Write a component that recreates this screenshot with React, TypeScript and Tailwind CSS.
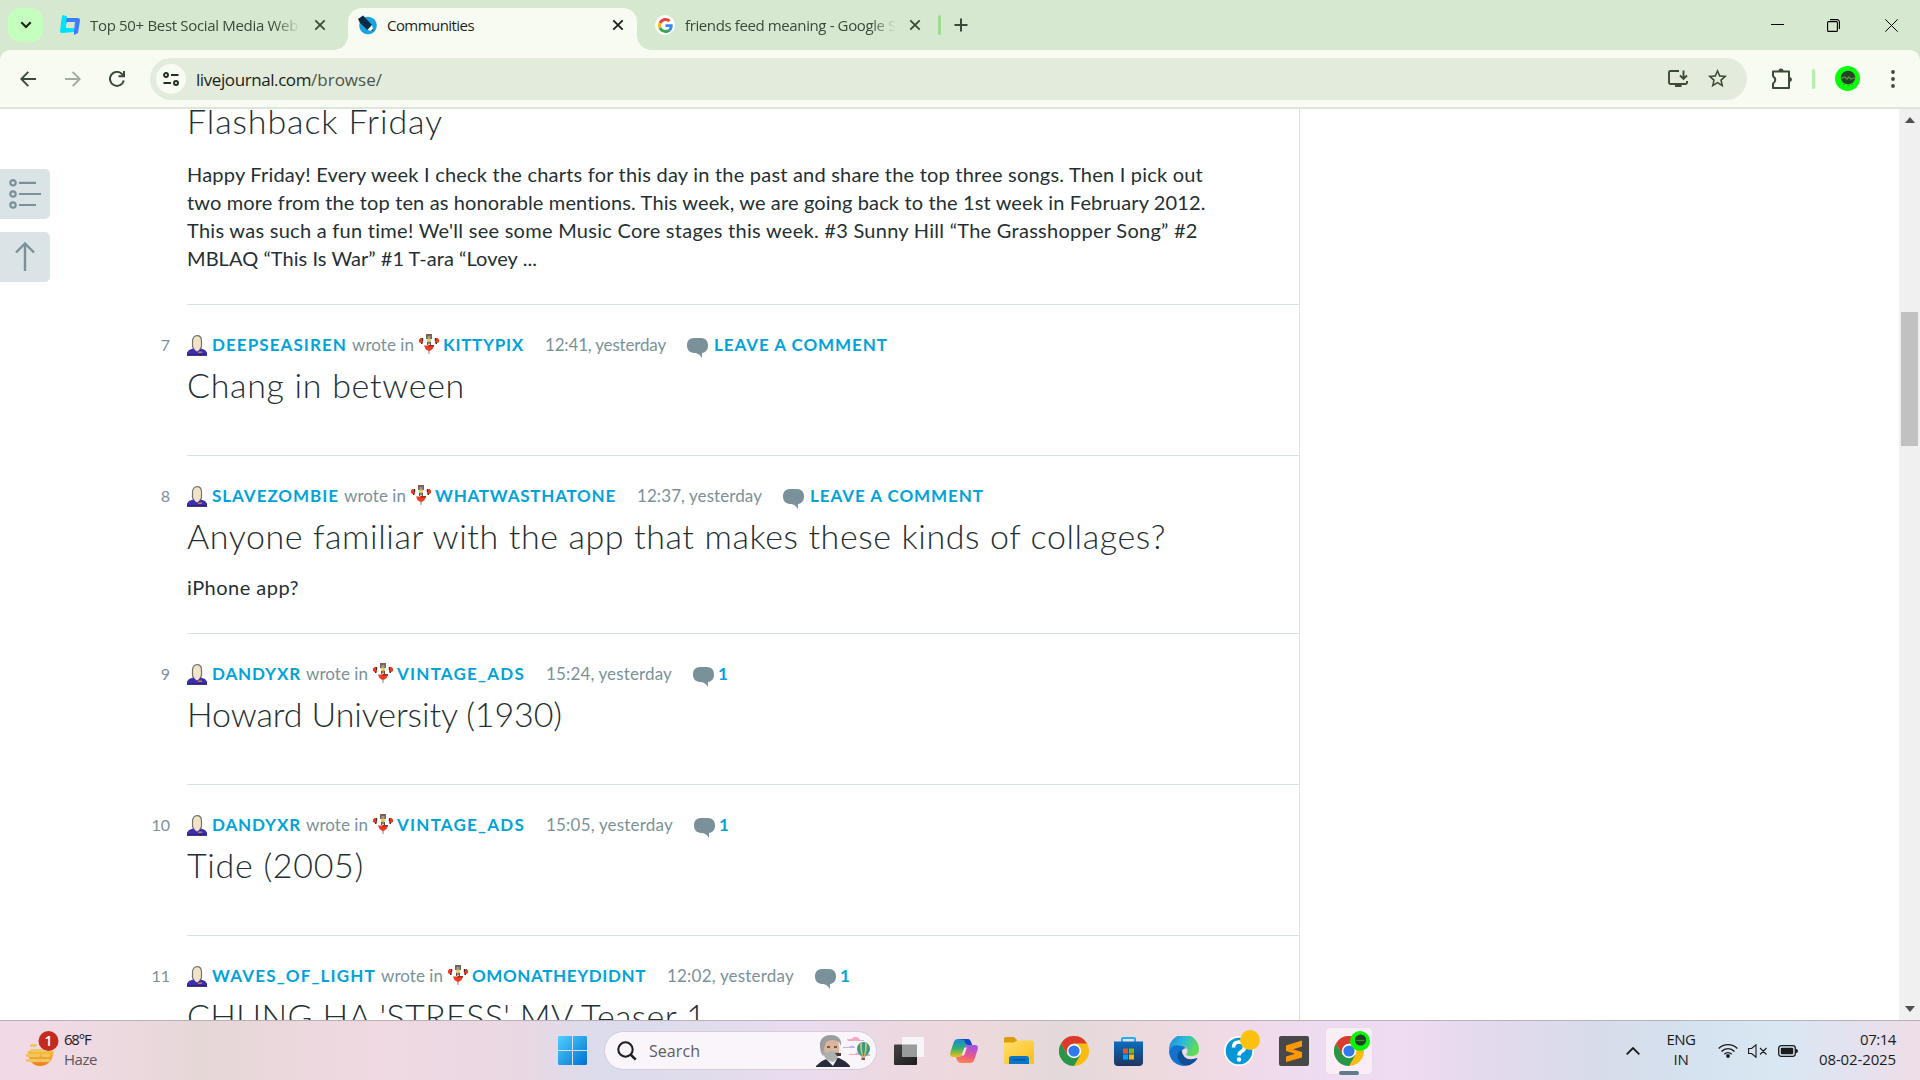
import { useLayoutEffect, useRef, type ReactNode } from "react";

/** Text whose tracking is tuned at runtime so that it spans exactly `w` pixels. */
function Fit({ w, className = "", children }: { w: number; className?: string; children: ReactNode }) {
  const ref = useRef<HTMLSpanElement>(null);
  useLayoutEffect(() => {
    const el = ref.current;
    if (!el) return;
    el.style.letterSpacing = "0px";
    const n = (el.textContent ?? "").length;
    const spacing = (w - el.getBoundingClientRect().width) / n;
    el.style.letterSpacing = `${spacing}px`;
  }, [w]);
  return (
    <span ref={ref} className={`inline-block whitespace-pre ${className}`}>
      {children}
    </span>
  );
}

const UI = "font-['Open_Sans','Noto_Sans',sans-serif]";

function CloseX({ className = "" }: { className?: string }) {
  return (
    <svg viewBox="0 0 12 12" className={`h-3 w-3 shrink-0 ${className}`} fill="none" stroke="currentColor" strokeWidth="1.8">
      <path d="M1.3 1.3l9.4 9.4M10.7 1.3l-9.4 9.4" />
    </svg>
  );
}

function GoogleG({ className = "" }: { className?: string }) {
  return (
    <svg viewBox="0 0 48 48" className={className}>
      <path fill="#EA4335" d="M24 9.5c3.54 0 6.71 1.22 9.21 3.6l6.85-6.85C35.9 2.38 30.47 0 24 0 14.62 0 6.51 5.38 2.56 13.22l7.98 6.19C12.43 13.72 17.74 9.5 24 9.5z" />
      <path fill="#4285F4" d="M46.98 24.55c0-1.57-.15-3.09-.38-4.55H24v9.02h12.94c-.58 2.96-2.26 5.48-4.78 7.18l7.73 6c4.51-4.18 7.09-10.36 7.09-17.65z" />
      <path fill="#FBBC05" d="M10.53 28.59c-.48-1.45-.76-2.99-.76-4.59s.27-3.14.76-4.59l-7.98-6.19C.92 16.46 0 20.12 0 24c0 3.88.92 7.54 2.56 10.78l7.97-6.19z" />
      <path fill="#34A853" d="M24 48c6.48 0 11.93-2.13 15.89-5.81l-7.73-6c-2.15 1.45-4.92 2.3-8.16 2.3-6.26 0-11.57-4.22-13.47-9.91l-7.98 6.19C6.51 42.62 14.62 48 24 48z" />
    </svg>
  );
}

function TabStrip() {
  return (
    <div className="flex h-[50px] items-end bg-[#d6e8cf] text-[#3a4a38]">
      <div className="ml-2 flex h-[50px] w-[35px] shrink-0 items-center">
        <div className="flex h-[34px] w-[35px] items-center justify-center rounded-xl bg-[#c5ffbe] text-[#14260f]">
          <svg viewBox="0 0 12 8" className="h-2 w-3" fill="none" stroke="currentColor" strokeWidth="2.1">
            <path d="M1.3 1.3L6 6l4.7-4.7" />
          </svg>
        </div>
      </div>

      <div className="flex h-[50px] w-[305px] shrink-0 items-center pl-[17px]">
        <svg viewBox="0 0 20 20" className="h-5 w-5 shrink-0">
          <path fill="#00e1fb" d="M3 0l4 1.5V3h3l-1 4H7l-1 6h8v4L2 18a2 2 0 0 1-2-2L1.800 2z" />
          <path fill="#3d7bff" d="M7 3h11a2 2 0 0 1 2 2l-2 13-4 2v-4l1-9H6z" />
          <path fill="#d6e8cf" d="M7 7.500h7l-1 5H6z" />
        </svg>
        <div className="ml-[10px] w-[210px] overflow-hidden [mask-image:linear-gradient(to_right,black_88%,transparent_100%)]">
          <Fit w={208} className="text-[15px] leading-6">Top 50+ Best Social Media Web</Fit>
        </div>
        <CloseX className="ml-[14px]" />
      </div>

      <div className="relative flex h-[42px] w-[289px] shrink-0 items-center rounded-t-[14px] bg-[#f8fbf2] pb-2 pl-[9px] text-[#1a1f19]">
        <div className="absolute bottom-0 -left-3.5 h-3.5 w-3.5 bg-[radial-gradient(circle_at_0_0,transparent_13.5px,#f8fbf2_14px)]" />
        <div className="absolute -right-3.5 bottom-0 h-3.5 w-3.5 bg-[radial-gradient(circle_at_100%_0,transparent_13.5px,#f8fbf2_14px)]" />
        <svg viewBox="0 0 20 20" className="h-5 w-5 shrink-0">
          <circle cx="11" cy="10.500" r="8.800" fill="#16a5df" />
          <path fill="#0b2a45" d="M1 4l5-3.500 9 9.500-4.500 5L3 8z" />
          <path fill="#fff" d="M15 10l1.500 6.500-6-1.500z" />
          <path fill="#0b2a45" d="M16.500 16.500l-2.500-.7 2-1.800z" />
        </svg>
        <Fit w={87} className="ml-[10px] text-[15px] leading-6">Communities</Fit>
        <CloseX className="ml-[138px]" />
      </div>

      <div className="flex h-[50px] items-center pl-[18px]">
        <div className="flex h-5 w-5 items-center justify-center rounded-full bg-white">
          <GoogleG className="h-[15px] w-[15px]" />
        </div>
        <div className="ml-[10px] w-[211px] overflow-hidden [mask-image:linear-gradient(to_right,black_88%,transparent_100%)]">
          <Fit w={211} className="text-[15px] leading-6">friends feed meaning - Google S</Fit>
        </div>
        <CloseX className="ml-[13px]" />
        <div className="ml-[17px] h-5 w-[2.500px] rounded-full bg-[#9bdc8e]" />
        <svg viewBox="0 0 14 14" className="ml-[13px] h-3.5 w-3.5" fill="none" stroke="currentColor" strokeWidth="2">
          <path d="M7 .5v13M.5 7h13" />
        </svg>
      </div>

      <div className="mr-[22px] ml-auto flex h-[50px] items-center gap-[43px] text-black">
        <svg viewBox="0 0 13 13" className="h-[13px] w-[13px]" shapeRendering="crispEdges">
          <path d="M0 5h13v1H0z" />
        </svg>
        <svg viewBox="0 0 13 13" className="h-[13px] w-[13px]" fill="none" stroke="currentColor" strokeWidth="1.100">
          <rect x=".6" y="2.600" width="9.800" height="9.800" rx="1" />
          <path d="M3 .6h7a2.400 2.400 0 0 1 2.400 2.400v7" />
        </svg>
        <svg viewBox="0 0 13 13" className="ml-[2px] h-[13px] w-[13px]" fill="none" stroke="currentColor">
          <path d="M.3.3l12.400 12.400M12.700.3L.3 12.700" />
        </svg>
      </div>
    </div>
  );
}

function Toolbar() {
  return (
    <div className="bg-[#d6e8cf]">
      <div className="flex h-[59px] items-center rounded-t-[10px] border-b-2 border-[#dde6d8] bg-[#f8fbf2] pl-5 text-[#3b4b37]">
        <svg viewBox="0 0 16 16" className="h-4 w-4" fill="none" stroke="currentColor" strokeWidth="1.900">
          <path d="M8.300.8L1.300 8l7 7.200M1.300 8H16" />
        </svg>
        <svg viewBox="0 0 16 16" className="ml-[29px] h-4 w-4 text-[#a4aca0]" fill="none" stroke="currentColor" strokeWidth="1.900">
          <path d="M7.700.8l7 7.200-7 7.200M14.700 8H0" />
        </svg>
        <svg viewBox="0 0 16 16" className="ml-[28px] h-4 w-4" fill="none" stroke="currentColor" strokeWidth="2">
          <path d="M14.800 9.500A7 7 0 1 1 13.300 3.300L15 5M15 0v5.300H9.500" />
        </svg>
        <div className="ml-[25px] flex h-[42px] w-[1597px] items-center rounded-full bg-[#e3ebdc] pl-[6px]">
          <div className="flex h-[30px] w-[30px] items-center justify-center rounded-full bg-[#f8fbf2] text-[#22301f]">
            <svg viewBox="0 0 16 14" className="h-3.5 w-4" fill="none" stroke="currentColor" strokeWidth="1.900">
              <circle cx="3" cy="3" r="2" />
              <path d="M8 3h7.500M.5 11H8" />
              <circle cx="13" cy="11" r="2" />
            </svg>
          </div>
          <Fit w={115} className="ml-[10px] pt-[2px] text-[17px] leading-6 text-[#1a1f19]">livejournal.com</Fit>
          <Fit w={71} className="pt-[2px] text-[17px] leading-6 text-[#4b5548]">/browse/</Fit>
          <svg viewBox="0 0 20 18" className="ml-auto h-[18px] w-5" fill="none" stroke="currentColor" strokeWidth="1.900">
            <path d="M11 1H2.500A1.500 1.500 0 0 0 1 2.500v10A1.500 1.500 0 0 0 2.500 14h15a1.500 1.500 0 0 0 1.500-1.500V11M15.500.5v8M12 5.500L15.500 9 19 5.500" />
            <path d="M7 14.500h6.500V17H7z" fill="currentColor" stroke="none" />
          </svg>
          <svg viewBox="0 0 24 24" className="mr-[18px] ml-[18px] h-[23px] w-[23px]" fill="currentColor">
            <path d="M22 9.240l-7.190-.62L12 2 9.190 8.630 2 9.240l5.460 4.730L5.820 21 12 17.270 18.180 21l-1.630-7.030L22 9.240zM12 15.400l-3.760 2.270 1-4.280-3.320-2.880 4.380-.38L12 6.100l1.710 4.040 4.380.38-3.320 2.880 1 4.280L12 15.400z" />
          </svg>
        </div>
        <svg viewBox="0 0 22 22" className="ml-[24px] h-[22px] w-[22px]" fill="none" stroke="currentColor" strokeWidth="2" strokeLinejoin="round">
          <path d="M2 3.500h16v16.500H2v-4.500q4.500-3.500 0-7.500z" />
          <path d="M7.500 3a2.500 2.500 0 0 1 5 0zM18.500 9a2.500 2.500 0 0 1 0 5z" fill="currentColor" stroke="none" />
        </svg>
        <div className="ml-[19px] h-5 w-[2.500px] rounded-full bg-[#b5efab]" />
        <svg viewBox="0 0 25 25" className="ml-[20px] h-[25px] w-[25px]">
          <circle cx="12.500" cy="12.500" r="12.500" fill="#0bfb0b" />
          <ellipse cx="13" cy="11.500" rx="7.200" ry="6.800" fill="#26412a" />
          <path d="M7 12l3-1 2 2 2-2 2 2 3-1M8 18h2m2 1h3m1-1h2" stroke="#4e9d3a" fill="none" strokeWidth="1.300" />
          <path d="M6 12h2M18 12h2" stroke="#b5652d" strokeWidth="1.200" />
        </svg>
        <svg viewBox="0 0 4 18" className="ml-[31px] h-[18px] w-1" fill="currentColor">
          <circle cx="2" cy="2" r="1.900" />
          <circle cx="2" cy="9" r="1.900" />
          <circle cx="2" cy="16" r="1.900" />
        </svg>
      </div>
    </div>
  );
}

function UserHead() {
  return (
    <svg viewBox="0 0 20 21" className="h-[21px] w-5 shrink-0">
      <path d="M5.500 6c0-3.500 2-5.300 4.500-5.300S14.500 2.500 14.500 6v5.500L13 14.500v3H7v-3l-1.500-3z" fill="#f1e3c8" stroke="#77736a" strokeWidth="1.200" />
      <path d="M0 20.500v-3L2 15l4-1.500 4 3 4-3 4 1.500 2 2.500v3z" fill="#3b2fb0" />
      <path d="M0 19.500h20v1.200H0z" fill="#1d175c" />
      <path d="M11 16.500h4V18h-4z" fill="#d07a4a" />
    </svg>
  );
}

function CommunityIcon() {
  return (
    <svg viewBox="0 0 20 20" className="h-5 w-5 shrink-0">
      <path d="M7 0h6v5H7z" fill="#7a6258" />
      <path d="M8.500 2h3v8h-3z" fill="#a09890" />
      <path d="M7.800 5.500h1.400L10 4l.8 1.500h1.400L10 8z" fill="#ffd91a" />
      <path d="M8 8h1.300v3H8zM10.700 8H12v3h-1.300z" fill="#555" />
      <path d="M5 11.500h10L13.500 15 10 17.500 6.500 15z" fill="#f0391f" />
      <path d="M9.500 11h5.500v1.500H9.500z" fill="#b02616" />
      <path d="M9.500 16h1v4h-1z" fill="#8a8a8a" />
      <path d="M0 5.500L1.500 4H4v4.500L2.500 9.500 0 8zM20 5.500L18.500 4H16v4.500l1.500 1 2.500-1.500z" fill="#f0391f" />
      <path d="M3 4h1.200v3H3zM15.800 4H17v3h-1.200zM2 8.500h1.500V10H2zM16.500 8.500H18V10h-1.500z" fill="#333" />
    </svg>
  );
}

function Bubble() {
  return (
    <svg viewBox="0 0 21 20" className="h-5 w-[21px] shrink-0" fill="#7a9199">
      <path d="M7 0h7c4.500 0 7 2.800 7 7.500 0 4.300-2.300 7-6 7.500V20c-1.500-2.500-3.500-4.300-6.500-5C3 15 0 12.500 0 7.500 0 2.800 2.500 0 7 0z" />
    </svg>
  );
}

type Entry = {
  n: number;
  user: string;
  userW: number;
  community: string;
  communityW: number;
  time: string;
  timeW: number;
  comments: string;
  commentsW: number;
  title: string;
  titleW: number;
  body?: string;
};

const entries: Entry[] = [
  { n: 7, user: "DEEPSEASIREN", userW: 135, community: "KITTYPIX", communityW: 81, time: "12:41, yesterday", timeW: 121, comments: "LEAVE A COMMENT", commentsW: 174, title: "Chang in between", titleW: 278 },
  { n: 8, user: "SLAVEZOMBIE", userW: 127, community: "WHATWASTHATONE", communityW: 181, time: "12:37, yesterday", timeW: 125, comments: "LEAVE A COMMENT", commentsW: 174, title: "Anyone familiar with the app that makes these kinds of collages?", titleW: 979, body: "iPhone app?" },
  { n: 9, user: "DANDYXR", userW: 89, community: "VINTAGE_ADS", communityW: 128, time: "15:24, yesterday", timeW: 126, comments: "1", commentsW: 8, title: "Howard University (1930)", titleW: 375 },
  { n: 10, user: "DANDYXR", userW: 89, community: "VINTAGE_ADS", communityW: 128, time: "15:05, yesterday", timeW: 127, comments: "1", commentsW: 8, title: "Tide (2005)", titleW: 177 },
  { n: 11, user: "WAVES_OF_LIGHT", userW: 164, community: "OMONATHEYDIDNT", communityW: 174, time: "12:02, yesterday", timeW: 127, comments: "1", commentsW: 8, title: "CHUNG HA 'STRESS' MV Teaser 1", titleW: 519 },
];

function EntryRow({ e }: { e: Entry }) {
  return (
    <article className={`-ml-10 shrink-0 pl-10 ${e.body ? "h-[178px]" : "h-[151px]"}`}>
      <div className="border-t border-[#d8e2e5]" />
      <div className="mt-[28px] -ml-10 flex h-6 items-center text-[17px] leading-6 text-[#7a9199]">
        <span className="w-[23px] text-right text-[16px]">{e.n}</span>
        <div className="ml-[17px] flex items-center">
          <UserHead />
          <Fit w={e.userW} className="ml-[5px] font-bold text-[#00a3d9]">{e.user}</Fit>
          <Fit w={62} className="ml-[5px]">wrote in</Fit>
        </div>
        <div className="ml-[5px] flex items-center">
          <span className="-mt-[2px]"><CommunityIcon /></span>
          <Fit w={e.communityW} className="ml-[4px] font-bold text-[#00a3d9]">{e.community}</Fit>
        </div>
        <Fit w={e.timeW} className="ml-[21px]">{e.time}</Fit>
        <div className="ml-[21px] flex items-center">
          <span className="pt-[5px]"><Bubble /></span>
          <Fit w={e.commentsW} className={`font-bold text-[#00a3d9] ${e.comments === "1" ? "ml-[4px]" : "ml-[6px]"}`}>{e.comments}</Fit>
        </div>
      </div>
      <h2 className="mt-[8px] h-10 text-[34px] leading-10 font-light text-[#242f33]">
        <Fit w={e.titleW}>{e.title}</Fit>
      </h2>
      {e.body && (
        <p className="mt-[17px] text-[20px] leading-7 text-[#242f33]">
          <Fit w={112}>{e.body}</Fit>
        </p>
      )}
    </article>
  );
}

const flashback: [string, number][] = [
  ["Happy Friday! Every week I check the charts for this day in the past and share the top three songs. Then I pick out", 1016],
  ["two more from the top ten as honorable mentions. This week, we are going back to the 1st week in February 2012.", 1019],
  ["This was such a fun time! We'll see some Music Core stages this week. #3 Sunny Hill “The Grasshopper Song” #2", 1011],
  ["MBLAQ “This Is War” #1 T-ara “Lovey ...", 350],
];

function Page() {
  return (
    <div className="flex h-[911px] overflow-hidden bg-white">
      <aside className="flex w-[147px] shrink-0 flex-col gap-[13px] pt-[60px]">
        <button className="flex h-[50px] w-[50px] items-center justify-center rounded-r-[5px] bg-[#dae3e6]">
          <svg viewBox="0 0 32 30" className="h-[30px] w-8" fill="none" stroke="#7a9199" strokeWidth="2.200">
            <circle cx="4" cy="3.800" r="2.700" />
            <circle cx="4" cy="15" r="2.700" />
            <circle cx="4" cy="26" r="2.700" />
            <path d="M10 3.800h17M10 15h22M10 26h17" />
          </svg>
        </button>
        <button className="flex h-[50px] w-[50px] items-center justify-center rounded-r-[5px] bg-[#dae3e6] pb-px">
          <svg viewBox="0 0 20 29" className="h-[29px] w-5" fill="none" stroke="#7a9199" strokeWidth="2.400">
            <path d="M10 1.500V29M1 10.500l9-9 9 9" />
          </svg>
        </button>
      </aside>

      <main className="flex h-[911px] w-[1153px] shrink-0 flex-col overflow-hidden border-r border-[#d8e2e5] pl-10 font-[Lato,sans-serif]">
        <section className="h-[195px] shrink-0">
          <h2 className="-mt-[8px] h-10 text-[34px] leading-10 font-light text-[#242f33]">
            <Fit w={256}>Flashback Friday</Fit>
          </h2>
          <p className="mt-[19px] flex flex-col text-[20px] leading-7 text-[#242f33]">
            {flashback.map(([line, w]) => (
              <span key={line} className="h-7">
                <Fit w={w}>{line}</Fit>
              </span>
            ))}
          </p>
        </section>
        {entries.map((e) => (
          <EntryRow key={e.n} e={e} />
        ))}
      </main>

      <div className="ml-auto flex w-[21px] flex-col items-center bg-[#f0f0f0] py-2">
        <svg viewBox="0 0 10 6" className="h-[6px] w-[10px]" fill="#505050">
          <path d="M5 0l5 6H0z" />
        </svg>
        <div className="mt-[189px] h-[134px] w-[17px] bg-[#c1c1c1]" />
        <svg viewBox="0 0 10 6" className="mt-auto h-[6px] w-[10px]" fill="#505050">
          <path d="M5 6L0 0h10z" />
        </svg>
      </div>
    </div>
  );
}

function ChromeLogo() {
  return (
    <svg viewBox="0 0 30 30" className="h-[30px] w-[30px]">
      <circle cx="15" cy="15" r="15" fill="#fbbc12" />
      <path d="M2 7.500A15 15 0 0 0 15 30l6.500-11.300L15 15 8.500 18.700z" fill="#27954a" />
      <path d="M2 7.500a15 15 0 0 1 26 0H15L8.500 18.700z" fill="#dc3a2e" />
      <circle cx="15" cy="15" r="7.200" fill="#fff" />
      <circle cx="15" cy="15" r="5.600" fill="#2f78ee" />
    </svg>
  );
}

function Taskbar() {
  return (
    <div className="relative flex h-[60px] items-center border-t border-[#b9b0b8] bg-[linear-gradient(90deg,#f2d9e6_0px,#efdae3_80px,#e6d7d7_200px,#f0d9e2_380px,#e9d8e4_520px,#dcdcec_600px,#e0dcec_700px,#eadcf0_800px,#ecd8e0_900px,#edd9dc_980px,#e3d9da_1060px,#eddade_1150px,#f0dae8_1240px,#eddcf2_1330px,#efdbf2_1400px,#e2daec_1500px,#d7dcea_1600px,#d5e2ef_1700px,#d9e7f3_1780px,#e3e2ef_1850px,#eedee8_1920px)] text-[15px] text-[#1b1b1b]">
      <div className="ml-[25px] flex items-center pb-[4px]">
        <svg viewBox="0 0 34 36" className="h-9 w-[34px]">
          <defs>
            <linearGradient id="sun" x1="0" y1="0" x2="0" y2="1">
              <stop offset="0" stopColor="#f9c33a" />
              <stop offset="1" stopColor="#ee7c17" />
            </linearGradient>
          </defs>
          <path d="M2.500 20h26c0 9-6 15-13.500 15S3.500 29 2.500 20z" fill="url(#sun)" />
          <path d="M6.500 14.500h4M6.500 19.500h11M2 24.500h12M18 24.500h6M2 29.500h22" stroke="#edc665" strokeWidth="2.800" strokeLinecap="round" />
          <circle cx="23.500" cy="10" r="10" fill="#c42b1f" />
          <text x="23.500" y="15" textAnchor="middle" fontSize="14" fontWeight="600" fill="#fff">1</text>
        </svg>
        <div className="ml-[5px] flex flex-col leading-5">
          <Fit w={30}>68°F</Fit>
          <Fit w={33} className="text-[#5d565b]">Haze</Fit>
        </div>
      </div>

      <div className="absolute top-0 left-[558px] flex h-[59px] items-center">
        <svg viewBox="0 0 29 29" className="h-[29px] w-[29px]">
          <defs>
            <linearGradient id="win" x1="0" y1="0" x2="1" y2="1">
              <stop offset="0" stopColor="#4fd0ff" />
              <stop offset="1" stopColor="#0070d0" />
            </linearGradient>
          </defs>
          <path d="M1 0h13v14H0V1zM15 0h13l1 1v13H15zM0 15h14v14H1l-1-1zM15 15h14v13l-1 1H15z" fill="url(#win)" />
        </svg>

        <div className="ml-[17px] flex h-[39px] w-[273px] items-center rounded-full border border-[#d5cbdb] bg-[#f9f5fb] pl-[12px]">
          <svg viewBox="0 0 20 20" className="h-5 w-5" fill="none" stroke="#1f1f1f" strokeWidth="2.100">
            <circle cx="8.500" cy="8.500" r="7.200" />
            <path d="M13.700 13.700l5 5" strokeWidth="2.600" />
          </svg>
          <Fit w={51} className="ml-[12px] text-[16px] text-[#5f5b62]">Search</Fit>
          <svg viewBox="0 0 56 34" className="ml-[116px] h-[34px] w-14">
            <path d="M0 32q6-6 11-7l12-1q7 3 11 8v1H0z" fill="#2a2a3a" />
            <path d="M10 25l7 7 4-7z" fill="#f3f3f3" />
            <ellipse cx="15" cy="14" rx="8.500" ry="12" fill="#d9b69c" />
            <path d="M4 13C3 5 8 1 15 1s11 4 10 11l-2-4q-7-4-13 0L8 14q1 6-1 8-3-4-3-9z" fill="#9a9d9b" />
            <path d="M6 16q2 3 6 2 4-2 8 0l3-1q0 8-6 11-9-1-11-12z" fill="#aeb0ad" />
            <path d="M11 13h3M18 13h3" stroke="#4a3b33" strokeWidth="1.300" />
            <path d="M19 19h6v3h-4z" fill="#4a3b33" />
            <path d="M31 5h5q1-3 4-2 3 0 4 3h4v1H32z" fill="#f0a9c8" />
            <path d="M27 13h6q3-3 6 0v1H27z" fill="#c9b3ea" />
            <path d="M33 20h6q2-3 5-1v2H33zM50 20h4v2h-5z" fill="#f4a6bd" />
            <path d="M41 14.500a6.500 6.500 0 0 1 13 0q0 4-4.500 8h-4q-4.500-4-4.500-8z" fill="#2f9d86" />
            <path d="M44 10q0 7 2 12.500h1Q45.500 15 46 8.500zM51 10q0 7-2 12.500h-1q1.500-7.500 1-14z" fill="#e9b85a" />
            <path d="M45.500 23.500h3.500V26h-3.500z" fill="#8a5a3a" />
          </svg>
        </div>

        <svg viewBox="0 0 30 28" className="ml-[17px] h-7 w-[30px]">
          <defs>
            <linearGradient id="tv" x1="0" y1="0" x2="1" y2="1">
              <stop offset="0" stopColor="#444" />
              <stop offset="1" stopColor="#1b1b1b" />
            </linearGradient>
          </defs>
          <rect x="0" y="7.500" width="23" height="20.500" rx="1" fill="url(#tv)" />
          <rect x="8" y="0" width="22" height="20" rx="1" fill="#f7f5f7" />
          <rect x="8" y="7.500" width="15" height="12.500" fill="#9b9b9b" />
        </svg>

        <svg viewBox="0 0 28 26" className="ml-[26px] h-[26px] w-7">
          <defs>
            <linearGradient id="cpa" x1="0" y1="0" x2="0" y2="1">
              <stop offset="0" stopColor="#1a86e8" />
              <stop offset=".5" stopColor="#2fae72" />
              <stop offset="1" stopColor="#f2c016" />
            </linearGradient>
            <linearGradient id="cpb" x1="0.500" y1="0" x2="0.300" y2="1">
              <stop offset="0" stopColor="#a052e8" />
              <stop offset=".6" stopColor="#ee5687" />
              <stop offset="1" stopColor="#fb8b4b" />
            </linearGradient>
          </defs>
          <path d="M8 1h10q2 0 3 3l1 3h-4q-2 0-3 3l-2 7q-1 2-3 2H3q-4 0-2.500-5L3.500 5Q4.500 1 8 1z" fill="url(#cpa)" />
          <path d="M8 1h10q2 0 3 3l1 3h-4l-2-1-2-4z" fill="#1746c4" />
          <path d="M20 25H10q-2 0-3-3l-1-3h4q2 0 3-3l2-7q1-2 3-2h7q4 0 2.500 5l-3 9q-1 4-4.500 4z" fill="url(#cpb)" />
          <path d="M14.500 9.500h2.500l-3 8h-2.500z" fill="#f3e4ea" />
        </svg>

        <svg viewBox="0 0 30 27" className="ml-[26px] h-[27px] w-[30px]">
          <defs>
            <linearGradient id="fold" x1="0" y1="0" x2="1" y2="1">
              <stop offset="0" stopColor="#ffdf6b" />
              <stop offset="1" stopColor="#fbbf18" />
            </linearGradient>
          </defs>
          <path d="M0 1.500Q0 0 1.500 0H10l3.500 3.500L10 8H0z" fill="#dd9d0b" />
          <path d="M0 5.500h10L13 3.500h15.500Q30 3.500 30 5v22H0z" fill="url(#fold)" />
          <path d="M5 27v-5.500Q5 19 7.500 19h15q2.500 0 2.500 2.500V27z" fill="#0d76c9" />
          <path d="M8.500 22.800h13" stroke="#0b4f94" strokeWidth="1.200" />
        </svg>

        <div className="ml-[25px]"><ChromeLogo /></div>

        <svg viewBox="0 0 29 30" className="ml-[25px] h-[30px] w-[29px]">
          <defs>
            <linearGradient id="store" x1="0" y1="0" x2="0" y2="1">
              <stop offset="0" stopColor="#0b6cc0" />
              <stop offset="1" stopColor="#1f3560" />
            </linearGradient>
          </defs>
          <path d="M8 6V2.500Q8 2 9 2h11q1 0 1 .5V6" fill="none" stroke="#1fb0f0" strokeWidth="2" />
          <path d="M0 5.500h29V26q0 4-4 4H4q-4 0-4-4z" fill="url(#store)" />
          <path d="M9 12.500h5v5H9z" fill="#f25022" />
          <path d="M15 12.500h5v5h-5z" fill="#7fba00" />
          <path d="M9 18.500h5v5H9z" fill="#00a4ef" />
          <path d="M15 18.500h5v5h-5z" fill="#ffb900" />
        </svg>

        <svg viewBox="0 0 30 30" className="ml-[26px] h-[30px] w-[30px]">
          <defs>
            <linearGradient id="edgeA" x1="0" y1="0" x2="1" y2=".4">
              <stop offset="0" stopColor="#1a86d8" />
              <stop offset=".5" stopColor="#2bb9dc" />
              <stop offset="1" stopColor="#5fdc55" />
            </linearGradient>
          </defs>
          <path d="M0 14A15 15 0 0 1 30 13q0 7-7 7-5 0-6-1.500 2-2 1.500-4.500Q17 9.500 10.500 9.500 3 10 0 14z" fill="url(#edgeA)" />
          <path d="M0 15Q2 9 9.500 9.300q5 .2 7.500 3-5 .5-5 6.700 0 6 5 10.800A15 15 0 0 1 0 15z" fill="#1173d0" />
          <path d="M12.500 14q-4 1.500-4 7 1 7 9 8.800 7-1 11-7.300-1-1-2 0-12 3.500-14-8.500z" fill="#104f96" />
        </svg>

        <svg viewBox="0 0 36 38" className="-mt-[5px] ml-[25px] h-[38px] w-9">
          <circle cx="15" cy="22" r="15" fill="#fff" />
          <circle cx="15" cy="22" r="13.300" fill="#0796d8" />
          <path d="M9.500 18.500q0-5.500 5.500-5.500t5.500 5q0 3-3 4.500-2.500 1.200-2.500 4" fill="none" stroke="#fff" strokeWidth="3.600" />
          <circle cx="15" cy="30.500" r="2.200" fill="#fff" />
          <circle cx="26" cy="11" r="10" fill="#fec10d" />
        </svg>

        <svg viewBox="0 0 30 30" className="ml-[19px] h-[30px] w-[30px]">
          <rect width="30" height="30" rx="2" fill="#484848" />
          <path d="M7 9.500L23 4.500v6l-9 2.800 9 2.800v5.500L7 26v-5.500l9-2.800-9-2.800z" fill="#ff9800" />
        </svg>

        <div className="relative ml-[16px] flex h-12 w-12 items-center justify-center rounded-[5px] border border-[#e9dcea] bg-[#f9eef5]">
          <ChromeLogo />
          <svg viewBox="0 0 20 20" className="absolute top-[3px] left-[24px] h-5 w-5">
            <circle cx="10" cy="10" r="10" fill="#0bf30b" />
            <circle cx="10.500" cy="9" r="5.600" fill="#203f25" />
            <path d="M6.500 9.500h8" stroke="#3f8c35" strokeWidth="1.300" />
          </svg>
          <div className="absolute -bottom-px left-[13px] h-1 w-5 rounded-full bg-[#64798a]" />
        </div>
      </div>

      <div className="mr-6 ml-auto flex h-[59px] items-center">
        <svg viewBox="0 0 14 8" className="h-2 w-3.5" fill="none" stroke="#1b1b1b" strokeWidth="1.800">
          <path d="M.7 7.300L7 1l6.300 6.300" />
        </svg>
        <div className="ml-[26px] flex w-[30px] flex-col items-center pb-[3px] leading-5">
          <Fit w={29}>ENG</Fit>
          <Fit w={15}>IN</Fit>
        </div>
        <svg viewBox="0 0 20 15" className="ml-[22px] h-[15px] w-5" fill="none" stroke="#1b1b1b" strokeWidth="1.400">
          <path d="M.7 5.500a13 13 0 0 1 18.600 0M3.500 8.400a9 9 0 0 1 13 0M6.300 11.200a5.200 5.200 0 0 1 7.400 0" />
          <circle cx="10" cy="13" r="1.900" fill="#1b1b1b" stroke="none" />
        </svg>
        <svg viewBox="0 0 20 14" className="ml-[10px] h-3.5 w-5" fill="none" stroke="#1b1b1b" strokeWidth="1.100">
          <path d="M.6 4.500h3L8 .8v12.400L3.600 9.500h-3zM12 4l6.500 6.500M18.500 4L12 10.500" />
        </svg>
        <svg viewBox="0 0 20 12" className="ml-[10px] h-3 w-5">
          <rect x=".7" y=".7" width="16.600" height="10.600" rx="2.500" fill="none" stroke="#1b1b1b" strokeWidth="1.300" />
          <rect x="2.800" y="2.800" width="12.400" height="6.400" rx="1" fill="#1b1b1b" />
          <path d="M18 4q2 0 2 2t-2 2z" fill="#1b1b1b" />
        </svg>
        <div className="ml-[21px] flex w-[77px] flex-col items-end pb-[4px] leading-5">
          <Fit w={36}>07:14</Fit>
          <Fit w={77}>08-02-2025</Fit>
        </div>
      </div>
    </div>
  );
}

export default function App() {
  return (
    <div className={`flex h-[1080px] w-[1920px] flex-col overflow-hidden bg-white ${UI}`}>
      <TabStrip />
      <Toolbar />
      <Page />
      <Taskbar />
    </div>
  );
}
